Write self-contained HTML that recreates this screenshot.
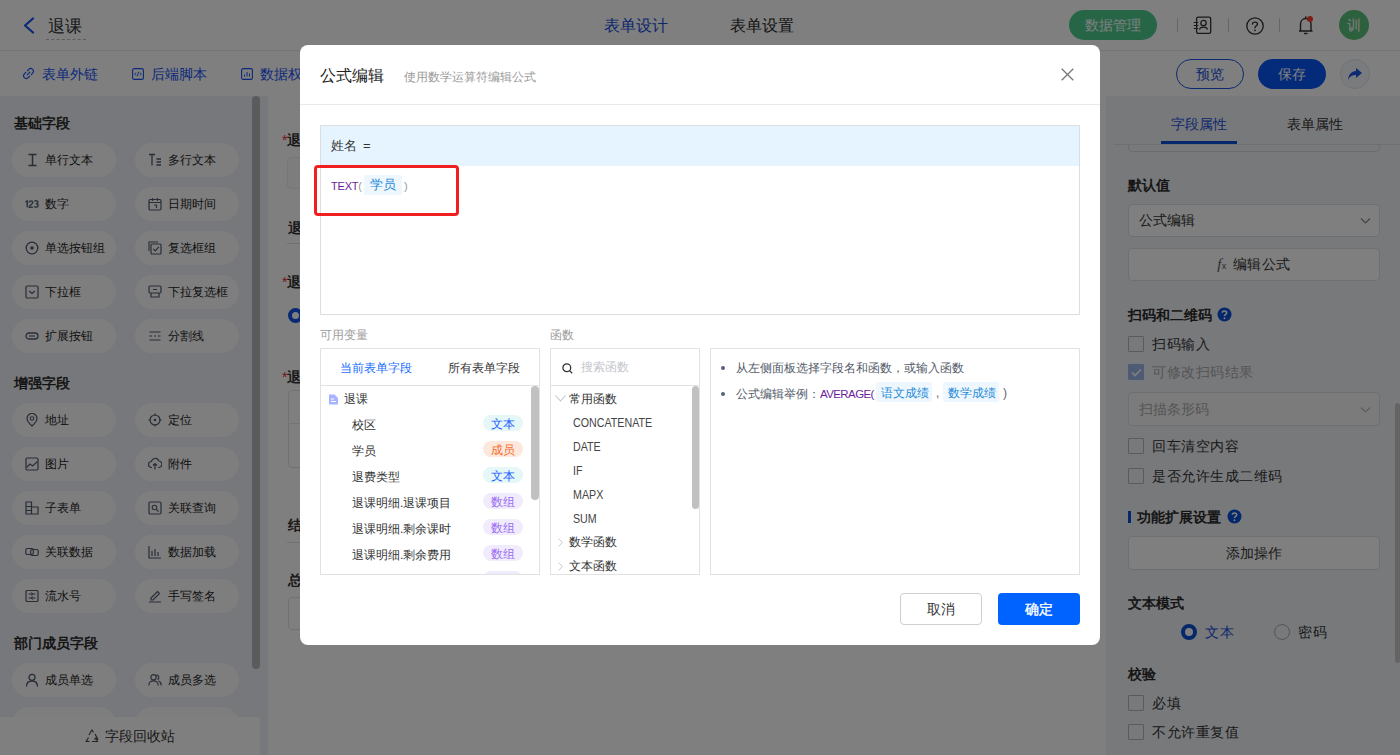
<!DOCTYPE html>
<html><head><meta charset="utf-8">
<style>
*{box-sizing:border-box;margin:0;padding:0}
html,body{width:1400px;height:755px;overflow:hidden;background:#fff;font-family:"Liberation Sans",sans-serif;color:#333}
.a{position:absolute}
.hdr{left:0;top:0;width:1400px;height:51px;background:#fff;border-bottom:1px solid #e8e8e8}
.tb{left:0;top:51px;width:1400px;height:45px;background:#fff}
.side{left:0;top:96px;width:268px;height:659px;background:#eff1f6}
.canvas{left:268px;top:96px;width:838px;height:659px;background:#fff}
.rp{left:1106px;top:96px;width:294px;height:659px;background:#f1f3f7}
.sec{font-size:14px;font-weight:normal;-webkit-text-stroke:0.5px #1f1f1f;color:#1f1f1f;line-height:14px}
.pill{width:104px;height:34px;border-radius:17px;background:#fcfcfd;font-size:12px;color:#1e1e1e;line-height:34px}
.pill .t{position:absolute;left:33px;top:0}
.pill svg{position:absolute;left:13px;top:10px}
.lbl{font-size:14px;font-weight:normal;-webkit-text-stroke:0.5px #222;color:#222;line-height:14px}
.box{width:252px;border:1px solid #dcdfe6;border-radius:4px;background:#fff;font-size:14px;color:#333}
.cb{width:16px;height:16px;border:1px solid #b4b7be;border-radius:1px;background:transparent}
.ct{font-size:14px;line-height:16px;color:#333;letter-spacing:0.5px}
.vt{font-size:12px;line-height:16px;color:#333;white-space:nowrap}
.bd{width:40px;height:16px;border-radius:8px;font-size:12px;line-height:19px;text-align:center}
.ft{font-size:12px;line-height:16px;color:#444;transform:scaleX(0.89);transform-origin:0 0}
.ht{font-size:12px;line-height:16px;color:#535b6a;white-space:nowrap}
.ov{left:0;top:0;width:1400px;height:755px;background:rgba(0,0,0,.5)}
.modal{left:300px;top:45px;width:800px;height:600px;background:#fff;border-radius:8px}
</style></head><body>
<!-- header -->
<div class="a hdr">
  <svg class="a" style="left:22px;top:17px" width="14" height="17" viewBox="0 0 14 17"><path d="M11 1.5 L3 8.5 L11 15.5" fill="none" stroke="#1550f0" stroke-width="2.2" stroke-linecap="round" stroke-linejoin="round"/></svg>
  <div class="a" style="left:48px;top:16px;font-size:16.5px;line-height:20px;color:#333">退课</div>
  <div class="a" style="left:46px;top:39px;width:40px;border-top:1px dashed #bbb"></div>
  <div class="a" style="left:604px;top:16px;font-size:16px;line-height:20px;color:#1a4fd8">表单设计</div>
  <div class="a" style="left:730px;top:16px;font-size:16px;line-height:20px;color:#2a2a2a">表单设置</div>
  <div class="a" style="left:1069px;top:10px;width:88px;height:30px;border-radius:15px;background:#4ccd8f;color:#fff;font-size:14px;line-height:30px;text-align:center">数据管理</div>
  <div class="a" style="left:1177px;top:18px;width:1px;height:14px;background:#ccc"></div>
  <div class="a" style="left:1228px;top:18px;width:1px;height:14px;background:#ccc"></div>
  <div class="a" style="left:1279px;top:18px;width:1px;height:14px;background:#ccc"></div>
  <svg class="a" style="left:1193px;top:16px" width="19" height="19" viewBox="0 0 19 19"><rect x="3.6" y="1.1" width="14.1" height="16.3" rx="1.6" fill="none" stroke="#333" stroke-width="1.3"/><path d="M0.8 6.5H5.2M0.8 9.5H5.2M0.8 12.5H5.2" stroke="#333" stroke-width="1.2"/><circle cx="10.5" cy="7" r="2.7" fill="none" stroke="#333" stroke-width="1.3"/><path d="M6.6 13.6C6.9 10.2 14.1 10.2 14.4 13.6" fill="none" stroke="#333" stroke-width="1.3"/></svg>
  <svg class="a" style="left:1246px;top:17px" width="18" height="18" viewBox="0 0 18 18"><circle cx="9" cy="9" r="8.2" fill="none" stroke="#333" stroke-width="1.3"/><path d="M6.5 7 C6.5 4.5 11.5 4.5 11.5 7 C11.5 8.8 9 8.8 9 10.8" fill="none" stroke="#333" stroke-width="1.4" stroke-linecap="round"/><circle cx="9" cy="13.3" r="0.9" fill="#333"/></svg>
  <svg class="a" style="left:1297px;top:15px" width="18" height="20" viewBox="0 0 18 20"><path d="M2 16 H15.5 M3.5 16 V9.5 C3.5 6 5.8 3.5 8.8 3.5 C11.8 3.5 14 6 14 9.5 V16" fill="none" stroke="#333" stroke-width="1.4"/><path d="M7 18.5 H10.5" stroke="#333" stroke-width="1.4"/><path d="M8.8 1.2 V3.2" stroke="#333" stroke-width="1.3"/><circle cx="13" cy="4" r="3" fill="#ff3b30"/></svg>
  <div class="a" style="left:1339px;top:10px;width:30px;height:30px;border-radius:15px;background:#5bc07a;color:#fff;font-size:14px;line-height:30px;text-align:center">训</div>
</div>
<!-- toolbar -->
<div class="a tb">
  <svg class="a" style="left:22px;top:16px" width="13" height="13" viewBox="0 0 13 13"><g transform="rotate(-45 6.5 6.5)" fill="none" stroke="#1652f5" stroke-width="1.15" stroke-linecap="round"><path d="M5.3 3.8H3.4A2.7 2.7 0 0 0 3.4 9.2H5.3"/><path d="M7.7 3.8H9.6A2.7 2.7 0 0 1 9.6 9.2H7.7"/><path d="M4.6 6.5H8.4"/></g></svg>
  <div class="a" style="left:42px;top:15px;font-size:14px;line-height:16px;color:#1652f5">表单外链</div>
  <svg class="a" style="left:132px;top:17px" width="12" height="12" viewBox="0 0 12 12"><rect x="0.6" y="0.6" width="10.8" height="10.8" rx="1.5" fill="none" stroke="#1652f5" stroke-width="1.1"/><path d="M4 4.5 L2.7 6 L4 7.5 M8 4.5 L9.3 6 L8 7.5 M6.7 3.8 L5.3 8.2" fill="none" stroke="#1652f5" stroke-width="0.9"/></svg>
  <div class="a" style="left:151px;top:15px;font-size:14px;line-height:16px;color:#1652f5">后端脚本</div>
  <svg class="a" style="left:241px;top:17px" width="12" height="12" viewBox="0 0 12 12"><rect x="0.6" y="0.6" width="10.8" height="10.8" rx="1.5" fill="none" stroke="#1652f5" stroke-width="1.1"/><path d="M3.5 8.5V6.5M6 8.5V4M8.5 8.5V5.5" stroke="#1652f5" stroke-width="1"/></svg>
  <div class="a" style="left:260px;top:15px;font-size:14px;line-height:16px;color:#1652f5">数据权限</div>
  <div class="a" style="left:1176px;top:8px;width:68px;height:30px;border-radius:15px;border:1px solid #1a56e0;color:#1a4fd8;font-size:14px;line-height:28px;text-align:center">预览</div>
  <div class="a" style="left:1258px;top:8px;width:68px;height:30px;border-radius:15px;background:#0756f2;color:#fff;font-size:14px;line-height:30px;text-align:center">保存</div>
  <div class="a" style="left:1340px;top:8px;width:30px;height:30px;border-radius:15px;border:1px solid #dfe4ee;background:#f5f7fb"></div>
  <svg class="a" style="left:1347px;top:15px" width="16" height="16" viewBox="0 0 16 16"><path d="M9 2 L15 7 L9 12 V9 C5 9 2.5 10.5 1 14 C1.5 8.5 4.5 5.3 9 5 Z" fill="#1a56e0"/></svg>
</div>
<!-- sidebar -->
<div class="a side" id="side">
<div class="a sec" style="left:14px;top:20px">基础字段</div>
<div class="a pill" style="left:12px;top:47px"><svg width="14" height="14" viewBox="0 0 14 14"><path d="M3.5 1.5H11.5M3.5 12.5H11.5M7.5 1.5V12.5" fill="none" stroke="#515a6e" stroke-width="1.5"/></svg><span class="t">单行文本</span></div>
<div class="a pill" style="left:135px;top:47px"><svg width="14" height="14" viewBox="0 0 14 14"><path d="M1 1.5H7M4 1.5V12.5M8.5 6H13M8.5 9H13M8.5 12H13" fill="none" stroke="#515a6e" stroke-width="1.3"/></svg><span class="t">多行文本</span></div>
<div class="a pill" style="left:12px;top:91px"><svg class="a" style="left:12.5px;top:13px" width="14" height="7.6" viewBox="0 0 15 8.6" preserveAspectRatio="none"><path d="M0.6 2.4L2.4 0.9V8.2" fill="none" stroke="#646c80" stroke-width="1.7" stroke-linejoin="round"/><path d="M4.5 2.7C4.5 0.6 8.3 0.6 8.3 2.7C8.3 4.6 4.6 5.8 4.5 8.2H8.5" fill="none" stroke="#646c80" stroke-width="1.7"/><path d="M10 1.6C10.8 0.5 13.8 0.6 13.8 2.4C13.8 3.9 12.2 4.3 11.6 4.3C12.3 4.3 14.1 4.6 14.1 6.3C14.1 8.5 10.6 8.6 9.8 7.3" fill="none" stroke="#646c80" stroke-width="1.7"/></svg><span class="t">数字</span></div>
<div class="a pill" style="left:135px;top:91px"><svg width="14" height="14" viewBox="0 0 14 14"><rect x="1" y="2.5" width="12" height="10.5" rx="1.2" fill="none" stroke="#515a6e" stroke-width="1.2"/><path d="M1 5.5H13M4.5 1V4M9.5 1V4M6 8H8.5V11" fill="none" stroke="#515a6e" stroke-width="1.1"/></svg><span class="t">日期时间</span></div>
<div class="a pill" style="left:12px;top:135px"><svg width="14" height="14" viewBox="0 0 14 14"><circle cx="7" cy="7" r="5.8" fill="none" stroke="#515a6e" stroke-width="1.3"/><circle cx="7" cy="7" r="1.8" fill="#515a6e"/></svg><span class="t">单选按钮组</span></div>
<div class="a pill" style="left:135px;top:135px"><svg width="14" height="14" viewBox="0 0 14 14"><path d="M1 10V1H10" fill="none" stroke="#515a6e" stroke-width="1.1"/><rect x="3" y="3" width="10" height="10" rx="1" fill="none" stroke="#515a6e" stroke-width="1.2"/><path d="M5.3 7.8L7.3 9.8L10.8 5.8" fill="none" stroke="#515a6e" stroke-width="1.2"/></svg><span class="t">复选框组</span></div>
<div class="a pill" style="left:12px;top:179px"><svg width="14" height="14" viewBox="0 0 14 14"><rect x="1" y="1" width="12" height="12" rx="1.2" fill="none" stroke="#515a6e" stroke-width="1.2"/><path d="M4.3 6L7 8.5L9.7 6" fill="none" stroke="#515a6e" stroke-width="1.2"/></svg><span class="t">下拉框</span></div>
<div class="a pill" style="left:135px;top:179px"><svg width="14" height="14" viewBox="0 0 14 14"><rect x="1" y="1" width="12" height="7" rx="1.2" fill="none" stroke="#515a6e" stroke-width="1.2"/><path d="M3 8V12H11V8M5 4.5H9" fill="none" stroke="#515a6e" stroke-width="1.2"/></svg><span class="t">下拉复选框</span></div>
<div class="a pill" style="left:12px;top:223px"><svg width="14" height="14" viewBox="0 0 14 14"><rect x="1" y="4" width="12" height="6" rx="3" fill="none" stroke="#515a6e" stroke-width="1.3"/><path d="M4 7H10" stroke="#515a6e" stroke-width="1.1"/></svg><span class="t">扩展按钮</span></div>
<div class="a pill" style="left:135px;top:223px"><svg width="14" height="14" viewBox="0 0 14 14"><path d="M1.5 3H12.5M1.5 11H12.5M1.5 7H4M6 7H8M10 7H12.5" fill="none" stroke="#515a6e" stroke-width="1.2"/></svg><span class="t">分割线</span></div>
<div class="a sec" style="left:14px;top:280px">增强字段</div>
<div class="a pill" style="left:12px;top:307px"><svg width="14" height="14" viewBox="0 0 14 14"><path d="M7 13C7 13 2 8.5 2 5.5A5 5 0 0 1 12 5.5C12 8.5 7 13 7 13Z" fill="none" stroke="#515a6e" stroke-width="1.2"/><circle cx="7" cy="5.5" r="1.8" fill="none" stroke="#515a6e" stroke-width="1.1"/></svg><span class="t">地址</span></div>
<div class="a pill" style="left:135px;top:307px"><svg width="14" height="14" viewBox="0 0 14 14"><circle cx="7" cy="7" r="5" fill="none" stroke="#515a6e" stroke-width="1.2"/><circle cx="7" cy="7" r="1.3" fill="#515a6e"/><path d="M7 0.5V3M7 11V13.5M0.5 7H3M11 7H13.5" stroke="#515a6e" stroke-width="1.2"/></svg><span class="t">定位</span></div>
<div class="a pill" style="left:12px;top:351px"><svg width="14" height="14" viewBox="0 0 14 14"><rect x="1" y="1" width="12" height="12" rx="1.2" fill="none" stroke="#515a6e" stroke-width="1.2"/><path d="M1.5 10.5L5 7L7.5 9L12.5 4.5" fill="none" stroke="#515a6e" stroke-width="1.1"/></svg><span class="t">图片</span></div>
<div class="a pill" style="left:135px;top:351px"><svg width="14" height="14" viewBox="0 0 14 14"><path d="M4 10.5H3.5A3 3 0 0 1 3.5 4.5A3.8 3.8 0 0 1 10.8 4A3 3 0 0 1 10.5 10.5H10M7 12.5V6.5M5 8.5L7 6.5L9 8.5" fill="none" stroke="#515a6e" stroke-width="1.2"/></svg><span class="t">附件</span></div>
<div class="a pill" style="left:12px;top:395px"><svg width="14" height="14" viewBox="0 0 14 14"><path d="M1 1H6.5V13H1ZM6.5 6H13V13H6.5M1 5.5H6.5M1 9.5H6.5" fill="none" stroke="#515a6e" stroke-width="1.2"/></svg><span class="t">子表单</span></div>
<div class="a pill" style="left:135px;top:395px"><svg width="14" height="14" viewBox="0 0 14 14"><rect x="1" y="1" width="12" height="12" rx="1.2" fill="none" stroke="#515a6e" stroke-width="1.2"/><circle cx="6.5" cy="6.5" r="2.3" fill="none" stroke="#515a6e" stroke-width="1.1"/><path d="M8.3 8.3L10.5 10.5M3.5 3.5" stroke="#515a6e" stroke-width="1.2"/></svg><span class="t">关联查询</span></div>
<div class="a pill" style="left:12px;top:439px"><svg width="14" height="14" viewBox="0 0 14 14"><rect x="0.8" y="3.5" width="7.5" height="6" rx="1.5" fill="none" stroke="#515a6e" stroke-width="1.2"/><rect x="5.7" y="4.5" width="7.5" height="6" rx="1.5" fill="none" stroke="#515a6e" stroke-width="1.2"/></svg><span class="t">关联数据</span></div>
<div class="a pill" style="left:135px;top:439px"><svg width="14" height="14" viewBox="0 0 14 14"><path d="M1 1V13H13M4 11V6M7 11V4M10 11V7" fill="none" stroke="#515a6e" stroke-width="1.2"/></svg><span class="t">数据加载</span></div>
<div class="a pill" style="left:12px;top:483px"><svg width="14" height="14" viewBox="0 0 14 14"><rect x="1" y="1.5" width="12" height="11" rx="1" fill="none" stroke="#515a6e" stroke-width="1.2"/><path d="M3.5 5H10.5M3.5 9H10.5M6 3.5L8 5L6 6.5M8 7.5L6 9L8 10.5" fill="none" stroke="#515a6e" stroke-width="1"/></svg><span class="t">流水号</span></div>
<div class="a pill" style="left:135px;top:483px"><svg width="14" height="14" viewBox="0 0 14 14"><path d="M3 9L9.5 2.5L11.5 4.5L5 11H3V9Z M1 13H13" fill="none" stroke="#515a6e" stroke-width="1.2"/></svg><span class="t">手写签名</span></div>
<div class="a sec" style="left:14px;top:540px">部门成员字段</div>
<div class="a pill" style="left:12px;top:567px"><svg width="14" height="14" viewBox="0 0 14 14"><circle cx="7" cy="4.3" r="3" fill="none" stroke="#515a6e" stroke-width="1.3"/><path d="M1.5 13.5C1.5 9.5 4 8 7 8C10 8 12.5 9.5 12.5 13.5" fill="none" stroke="#515a6e" stroke-width="1.3"/></svg><span class="t">成员单选</span></div>
<div class="a pill" style="left:135px;top:567px"><svg width="14" height="14" viewBox="0 0 14 14"><circle cx="5.5" cy="4.3" r="2.7" fill="none" stroke="#515a6e" stroke-width="1.2"/><path d="M0.8 12.5C0.8 9 3 7.8 5.5 7.8C8 7.8 10.2 9 10.2 12.5M8.5 1.8A2.7 2.7 0 0 1 9.5 6.8M10.5 8C12 8.5 13.3 10 13.3 12.5" fill="none" stroke="#515a6e" stroke-width="1.2"/></svg><span class="t">成员多选</span></div>
<div class="a pill" style="left:12px;top:611px"><svg width="14" height="14" viewBox="0 0 14 14"><circle cx="7" cy="4.3" r="3" fill="none" stroke="#515a6e" stroke-width="1.3"/><path d="M1.5 13.5C1.5 9.5 4 8 7 8C10 8 12.5 9.5 12.5 13.5" fill="none" stroke="#515a6e" stroke-width="1.3"/></svg><span class="t">部门单选</span></div>
<div class="a pill" style="left:135px;top:611px"><svg width="14" height="14" viewBox="0 0 14 14"><circle cx="5.5" cy="4.3" r="2.7" fill="none" stroke="#515a6e" stroke-width="1.2"/><path d="M0.8 12.5C0.8 9 3 7.8 5.5 7.8C8 7.8 10.2 9 10.2 12.5M8.5 1.8A2.7 2.7 0 0 1 9.5 6.8M10.5 8C12 8.5 13.3 10 13.3 12.5" fill="none" stroke="#515a6e" stroke-width="1.2"/></svg><span class="t">部门多选</span></div>
<div class="a" style="left:252px;top:0px;width:8px;height:573px;border-radius:4px;background:#b6b7ba"></div>
<div class="a" style="left:0;top:621px;width:260px;height:38px;background:#fff;font-size:14px;color:#333;line-height:38px"><svg class="a" style="left:85px;top:12px" width="14" height="14" viewBox="0 0 14 14"><path d="M5.5 3L7 1L8.5 3.5M10 5L12.8 10H9M4.5 12.5H1.2L3.5 8.5M6.5 1.5L4 6M10.5 8.5L12.5 12.5H7M3 9.5L1 12.5" fill="none" stroke="#444" stroke-width="1.1"/></svg><span class="a" style="left:105px;top:0">字段回收站</span></div>
</div>
<!-- canvas -->
<div class="a canvas" id="canvas">
<div class="a" style="left:14px;top:37px;font-size:14px;line-height:14px;color:#333;font-weight:bold"><span style="color:#f5222d;font-weight:normal">*</span>退课学员</div>
<div class="a" style="left:19px;top:61px;width:500px;height:32px;border:1px solid #ececec;border-radius:4px;background:#fafafa"></div>
<div class="a" style="left:20px;top:125px;font-size:14px;line-height:14px;color:#333;font-weight:bold">退课明细</div>
<div class="a" style="left:19px;top:147px;width:700px;height:1px;background:#e0e0e0"></div>
<div class="a" style="left:14px;top:179px;font-size:14px;line-height:14px;color:#333;font-weight:bold"><span style="color:#f5222d;font-weight:normal">*</span>退费类型</div>
<div class="a" style="left:20px;top:212px;width:15px;height:15px;border-radius:8px;border:4.5px solid #1450e6;background:#fff"></div>
<div class="a" style="left:14px;top:274px;font-size:14px;line-height:14px;color:#333;font-weight:bold"><span style="color:#f5222d;font-weight:normal">*</span>退课原因</div>
<div class="a" style="left:20px;top:294px;width:700px;height:78px;border:1px solid #e3e3e3;border-radius:4px"></div>
<div class="a" style="left:20px;top:327px;width:700px;height:1px;background:#e8e8e8"></div>
<div class="a" style="left:20px;top:422px;font-size:14px;line-height:14px;color:#333;font-weight:bold">结算</div>
<div class="a" style="left:19px;top:446px;width:700px;height:1px;background:#e0e0e0"></div>
<div class="a" style="left:20px;top:477px;font-size:14px;line-height:14px;color:#333;font-weight:bold">总计</div>
<div class="a" style="left:20px;top:501px;width:500px;height:33px;border:1px solid #e3e3e3;border-radius:4px"></div>
</div>
<!-- right panel -->
<div class="a rp" id="rp">
<div class="a" style="left:22px;top:21px;width:252px;height:35px;border:1px solid #d5d8df;border-radius:4px;background:transparent"></div>
<div class="a" style="left:0;top:0;width:294px;height:48px;background:#f1f3f7"></div>
<div class="a" style="left:8px;top:48px;width:286px;height:1px;background:#dcdfe6"></div>
<div class="a" style="left:65px;top:20px;font-size:14px;line-height:16px;color:#1a4fd8">字段属性</div>
<div class="a" style="left:181px;top:20px;font-size:14px;line-height:16px;color:#333">表单属性</div>
<div class="a" style="left:55px;top:45px;width:76px;height:3px;background:#0a4fd6"></div>
<div class="a lbl" style="left:22px;top:82px">默认值</div>
<div class="a box" style="left:22px;top:108px;height:33px"><span class="a" style="left:10px;top:0;line-height:31px">公式编辑</span><svg class="a" style="left:231px;top:12px" width="11" height="8" viewBox="0 0 11 8"><path d="M1 1.5L5.5 6L10 1.5" fill="none" stroke="#888" stroke-width="1.2"/></svg></div>
<div class="a box" style="left:22px;top:152px;height:33px;text-align:center;line-height:31px;letter-spacing:0.5px"><i style="font-family:'Liberation Serif',serif;font-size:15px;color:#555">f</i><span style="font-size:9px;color:#555">x</span><span style="margin-left:6px">编辑公式</span></div>
<div class="a lbl" style="left:22px;top:212px">扫码和二维码<svg style="position:absolute;left:89px;top:-1px" width="15" height="15" viewBox="0 0 15 15"><circle cx="7.5" cy="7.5" r="7" fill="#0a4fd6"/><path d="M5.3 5.8C5.3 3.3 9.7 3.3 9.7 5.8C9.7 7.3 7.5 7.3 7.5 9" fill="none" stroke="#fff" stroke-width="1.6"/><circle cx="7.5" cy="11.2" r="0.95" fill="#fff"/></svg></div>
<div class="a cb" style="left:22px;top:240px"></div><div class="a ct" style="left:46px;top:240px">扫码输入</div>
<div class="a cb" style="left:22px;top:268px;background:#9fb6ec;border-color:#9fb6ec"><svg class="a" style="left:2px;top:3px" width="11" height="9" viewBox="0 0 11 9"><path d="M1 4.5L4 7.5L10 1.5" fill="none" stroke="#fff" stroke-width="1.6"/></svg></div><div class="a ct" style="left:46px;top:268px;color:#aaa">可修改扫码结果</div>
<div class="a box" style="left:22px;top:296px;height:34px;background:#f7f7f8"><span class="a" style="left:10px;top:0;line-height:32px;color:#aaa">扫描条形码</span><svg class="a" style="left:231px;top:13px" width="11" height="8" viewBox="0 0 11 8"><path d="M1 1.5L5.5 6L10 1.5" fill="none" stroke="#bbb" stroke-width="1.2"/></svg></div>
<div class="a cb" style="left:22px;top:342px"></div><div class="a ct" style="left:46px;top:342px">回车清空内容</div>
<div class="a cb" style="left:22px;top:372px"></div><div class="a ct" style="left:46px;top:372px">是否允许生成二维码</div>
<div class="a" style="left:22px;top:415px;width:2.5px;height:12px;background:#0a4fd6"></div>
<div class="a lbl" style="left:31px;top:414px">功能扩展设置<svg style="position:absolute;left:90px;top:-1px" width="15" height="15" viewBox="0 0 15 15"><circle cx="7.5" cy="7.5" r="7" fill="#0a4fd6"/><path d="M5.3 5.8C5.3 3.3 9.7 3.3 9.7 5.8C9.7 7.3 7.5 7.3 7.5 9" fill="none" stroke="#fff" stroke-width="1.6"/><circle cx="7.5" cy="11.2" r="0.95" fill="#fff"/></svg></div>
<div class="a box" style="left:22px;top:440px;height:34px;text-align:center;line-height:32px">添加操作</div>
<div class="a lbl" style="left:22px;top:500px">文本模式</div>
<div class="a" style="left:75px;top:528px;width:16px;height:16px;border-radius:8px;border:4.5px solid #0a4fd6;background:#fff"></div>
<div class="a ct" style="left:99px;top:528px;color:#1a4fd8">文本</div>
<div class="a" style="left:168px;top:528px;width:16px;height:16px;border-radius:8px;border:1px solid #a9acb3;background:transparent"></div>
<div class="a ct" style="left:192px;top:528px">密码</div>
<div class="a lbl" style="left:22px;top:571px">校验</div>
<div class="a cb" style="left:22px;top:599px"></div><div class="a ct" style="left:46px;top:599px">必填</div>
<div class="a cb" style="left:22px;top:628px"></div><div class="a ct" style="left:46px;top:628px">不允许重复值</div>
<div class="a" style="left:289px;top:307px;width:5px;height:260px;border-radius:3px;background:#c8c8ca"></div>
</div>
<div class="a ov"></div>
<div class="a modal" id="modal">
<div class="a" style="left:20px;top:21px;font-size:16px;line-height:20px;color:#222">公式编辑</div>
<div class="a" style="left:104px;top:24px;font-size:12px;line-height:16px;color:#9a9a9a">使用数学运算符编辑公式</div>
<svg class="a" style="left:761px;top:23px" width="13" height="13" viewBox="0 0 13 13"><path d="M0.7 0.7L12.3 12.3M12.3 0.7L0.7 12.3" stroke="#777" stroke-width="1.3"/></svg>
<div class="a" style="left:0;top:59px;width:800px;height:1px;background:#e9e9e9"></div>
<!-- editor -->
<div class="a" style="left:20px;top:80px;width:760px;height:190px;border:1px solid #dddddd;background:#fff"></div>
<div class="a" style="left:21px;top:81px;width:758px;height:40px;background:#e6f4ff"></div>
<div class="a" style="left:31px;top:93px;font-size:13px;line-height:16px;color:#333">姓名<span style="margin-left:6px">=</span></div>
<div class="a" style="left:31px;top:133px;font-size:11px;line-height:16px;color:#6b1d9c;letter-spacing:-0.2px">TEXT<span style="color:#999">(</span></div>
<div class="a" style="left:64px;top:130px;width:38px;height:20px;background:#eef7fd;border-radius:2px"></div>
<div class="a" style="left:70px;top:132px;font-size:13px;line-height:16px;color:#1f8ad8">学员</div>
<div class="a" style="left:104px;top:133px;font-size:11px;line-height:16px;color:#999">)</div>
<div class="a" style="left:13.5px;top:119.5px;width:145px;height:51px;border:3px solid #f11f1f;border-radius:4px"></div>
<!-- vars -->
<div class="a" style="left:20px;top:282px;font-size:12px;line-height:16px;color:#9b9b9b">可用变量</div>
<div class="a" style="left:20px;top:303px;width:220px;height:227px;border:1px solid #e2e2e2;background:#fff;overflow:hidden">
  <div class="a" style="left:19px;top:11px;font-size:12px;line-height:16px;color:#1a6dff">当前表单字段</div>
  <div class="a" style="left:127px;top:11px;font-size:12px;line-height:16px;color:#333">所有表单字段</div>
  <div class="a" style="left:0;top:36px;width:220px;height:1px;background:#e2e2e2"></div>
  <svg class="a" style="left:7px;top:45px" width="11" height="11" viewBox="0 0 11 11"><path d="M1 0.5H6.5L10 4V10.5H1Z" fill="#a7b4ff"/><path d="M3 5H6M3 7.5H8" stroke="#fff" stroke-width="1"/></svg>
  <div class="a vt" style="left:23px;top:42px">退课</div>
  <div class="a vt" style="left:31px;top:68px">校区</div><div class="a bd" style="left:162px;top:66px;background:#e6f7f7;color:#1f62ff">文本</div>
  <div class="a vt" style="left:31px;top:94px">学员</div><div class="a bd" style="left:162px;top:92px;background:#fde8dd;color:#f26f2d">成员</div>
  <div class="a vt" style="left:31px;top:120px">退费类型</div><div class="a bd" style="left:162px;top:118px;background:#e6f7f7;color:#1f62ff">文本</div>
  <div class="a vt" style="left:31px;top:146px">退课明细.退课项目</div><div class="a bd" style="left:162px;top:144px;background:#f1ecfd;color:#9b6cf2">数组</div>
  <div class="a vt" style="left:31px;top:172px">退课明细.剩余课时</div><div class="a bd" style="left:162px;top:170px;background:#f1ecfd;color:#9b6cf2">数组</div>
  <div class="a vt" style="left:31px;top:198px">退课明细.剩余费用</div><div class="a bd" style="left:162px;top:196px;background:#f1ecfd;color:#9b6cf2">数组</div>
  <div class="a bd" style="left:162px;top:222px;background:#f1ecfd;color:#9b6cf2">数组</div>
  <div class="a" style="left:210px;top:37px;width:8px;height:114px;border-radius:4px;background:#c1c1c1"></div>
</div>
<!-- funcs -->
<div class="a" style="left:250px;top:282px;font-size:12px;line-height:16px;color:#9b9b9b">函数</div>
<div class="a" style="left:250px;top:303px;width:150px;height:227px;border:1px solid #e2e2e2;background:#fff;overflow:hidden">
  <svg class="a" style="left:11px;top:14px" width="11" height="11" viewBox="0 0 11 11"><circle cx="4.8" cy="4.8" r="3.9" fill="none" stroke="#333" stroke-width="1.3"/><path d="M7.6 7.6L10.2 10.2" stroke="#333" stroke-width="1.3"/></svg>
  <div class="a" style="left:30px;top:10px;font-size:12px;line-height:16px;color:#c4c7cc">搜索函数</div>
  <div class="a" style="left:0;top:36px;width:150px;height:1px;background:#e2e2e2"></div>
  <svg class="a" style="left:4px;top:46px" width="11" height="7" viewBox="0 0 11 7"><path d="M0.5 0.5L5.5 6L10.5 0.5" fill="none" stroke="#bfc4ce" stroke-width="1.05"/></svg>
  <div class="a vt" style="left:18px;top:42px">常用函数</div>
  <div class="a ft" style="left:22px;top:66px">CONCATENATE</div>
  <div class="a ft" style="left:22px;top:90px">DATE</div>
  <div class="a ft" style="left:22px;top:114px">IF</div>
  <div class="a ft" style="left:22px;top:138px">MAPX</div>
  <div class="a ft" style="left:22px;top:162px">SUM</div>
  <svg class="a" style="left:7px;top:189px" width="5" height="9" viewBox="0 0 5 9"><path d="M0.6 0.6L4.4 4.5L0.6 8.4" fill="none" stroke="#c5c9d2" stroke-width="1"/></svg><svg class="a" style="left:7px;top:213px" width="5" height="9" viewBox="0 0 5 9"><path d="M0.6 0.6L4.4 4.5L0.6 8.4" fill="none" stroke="#c5c9d2" stroke-width="1"/></svg>
  <div class="a vt" style="left:18px;top:185px">数学函数</div>
  <div class="a vt" style="left:18px;top:209px">文本函数</div>
  <div class="a" style="left:141px;top:37px;width:7px;height:123px;border-radius:4px;background:#c1c1c1"></div>
</div>
<!-- help -->
<div class="a" style="left:410px;top:303px;width:370px;height:227px;border:1px solid #e2e2e2;background:#fff">
  <div class="a" style="left:9.5px;top:17px;width:4px;height:4px;border-radius:2px;background:#56607a"></div>
  <div class="a ht" style="left:25px;top:11px">从左侧面板选择字段名和函数，或输入函数</div>
  <div class="a" style="left:9.5px;top:43px;width:4px;height:4px;border-radius:2px;background:#56607a"></div>
  <div class="a ht" style="left:25px;top:37px">公式编辑举例：<span style="color:#6b1d9c;letter-spacing:-0.6px;font-size:11.5px">AVERAGE(</span></div>
  
</div>
<div class="a" style="left:576px;top:337px;width:56px;height:20px;background:#eef7fd;border-radius:2px"></div>
<div class="a ht" style="left:581px;top:340px;color:#1f8ad8">语文成绩</div>
<div class="a ht" style="left:636px;top:340px;color:#666">,</div>
<div class="a" style="left:643px;top:337px;width:56px;height:20px;background:#eef7fd;border-radius:2px"></div>
<div class="a ht" style="left:648px;top:340px;color:#1f8ad8">数学成绩</div>
<div class="a ht" style="left:703px;top:340px;color:#666">)</div>
<!-- buttons -->
<div class="a" style="left:600px;top:548px;width:82px;height:32px;border:1px solid #cfcfcf;border-radius:4px;font-size:14px;line-height:30px;text-align:center;color:#333">取消</div>
<div class="a" style="left:698px;top:548px;width:82px;height:32px;border-radius:4px;background:#0062ff;font-size:14px;line-height:32px;text-align:center;color:#fff;-webkit-text-stroke:0.35px #fff">确定</div>
</div>
</body></html>
